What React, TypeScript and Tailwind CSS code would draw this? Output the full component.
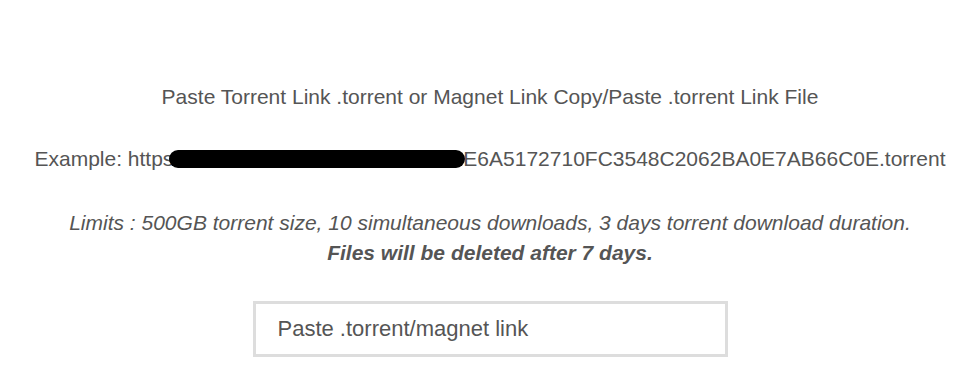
export default function App() {
  return (
    <div
      className="flex min-h-[379px] flex-col items-center bg-white pt-[82px] text-[21px] leading-[30px] text-[#555]"
      style={{ fontFamily: '"Liberation Sans", Arial, sans-serif' }}
    >
      <p>Paste Torrent Link .torrent or Magnet Link Copy/Paste .torrent Link File</p>
      <p className="mt-8 flex items-center whitespace-nowrap">
        <span>Example: https</span>
        <span className="-ml-[4px] -mr-[2px] inline-block h-[18px] w-[296px] rounded-full bg-black" />
        <span>E6A5172710FC3548C2062BA0E7AB66C0E.torrent</span>
      </p>
      <div className="mt-[34px] text-center italic">
        <p>Limits : 500GB torrent size, 10 simultaneous downloads, 3 days torrent download duration.</p>
        <p className="font-bold">Files will be deleted after 7 days.</p>
      </div>
      <input
        type="text"
        placeholder="Paste .torrent/magnet link"
        className="mt-[33px] h-[56px] w-[475px] border-[3px] border-[#ddd] bg-white px-[22px] text-[22px] text-[#555] outline-none placeholder:text-[#555]"
      />
    </div>
  );
}
